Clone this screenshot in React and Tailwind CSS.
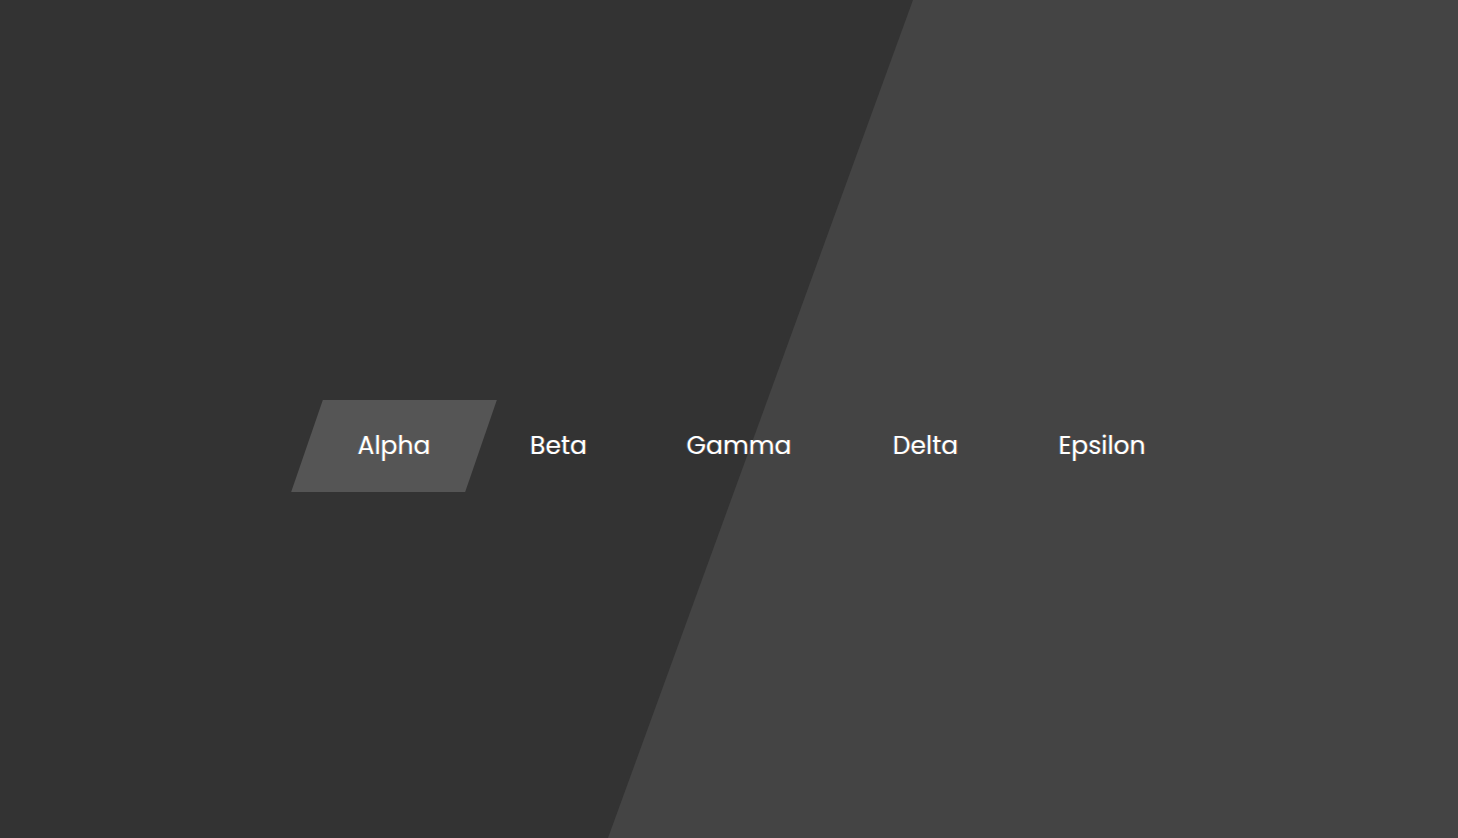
import React, { useState } from 'react';

const ITEMS = [
  { label: 'Alpha', width: 'w-[174px]' },
  { label: 'Beta', width: 'w-[155px]' },
  { label: 'Gamma', width: 'w-[206px]' },
  { label: 'Delta', width: 'w-[167px]' },
  { label: 'Epsilon', width: 'w-[186px]' },
];

export default function App() {
  const [active, setActive] = useState('Alpha');

  return (
    <div className="relative h-screen w-full overflow-hidden bg-[#333333] font-['Poppins','DejaVu_Sans',sans-serif]">
      <div className="absolute inset-0 bg-[#444444] [clip-path:polygon(913px_0,100%_0,100%_100%,608px_100%)]" />

      <nav className="relative flex pl-[307px] pt-[400px]">
        {ITEMS.map((item) => (
          <button
            key={item.label}
            type="button"
            onClick={() => setActive(item.label)}
            className={`relative flex h-[92px] ${item.width} items-center justify-center`}
          >
            {active === item.label && (
              <span className="absolute inset-0 skew-x-[-19deg] bg-[#555555]" />
            )}
            <span className="relative text-[25px] text-white [text-shadow:1px_0_0_rgba(190,110,60,0.45),-1px_0_0_rgba(90,180,255,0.3)]">
              {item.label}
            </span>
          </button>
        ))}
      </nav>
    </div>
  );
}
